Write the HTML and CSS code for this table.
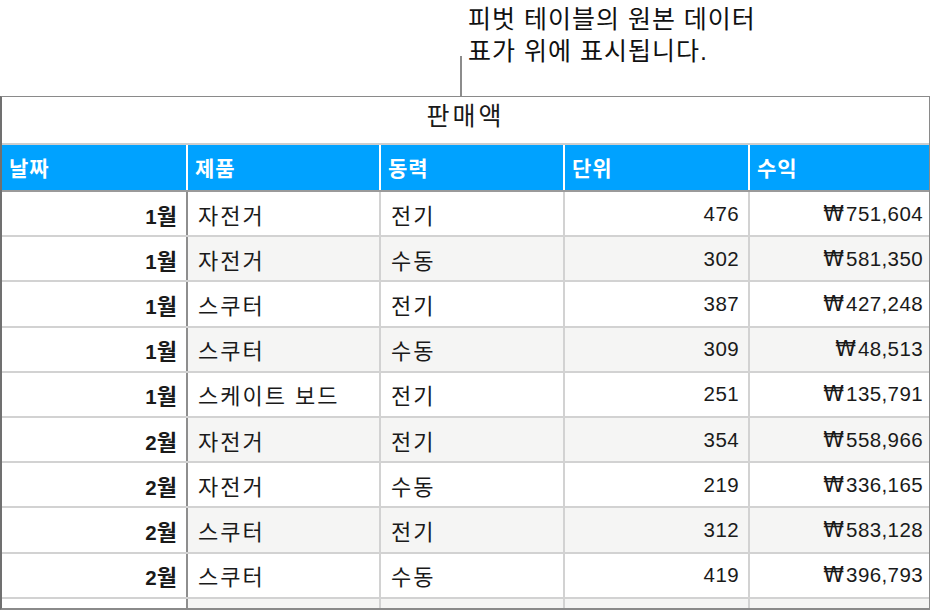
FILE: index.html
```html
<!DOCTYPE html>
<html lang="ko">
<head>
<meta charset="utf-8">
<link rel="stylesheet" href="styles.css">
</head>
<body>
<div class="callout">
  <div class="leader"></div>
  <div class="callout-text">피벗 테이블의 원본 데이터<br>표가 위에 표시됩니다.</div>
</div>
<div class="sheet">
  <div class="title">판매액</div>
  <table class="grid">
    <colgroup>
      <col class="c1"><col class="c2"><col class="c3"><col class="c4"><col class="c5">
    </colgroup>
    <thead>
      <tr><th>날짜</th><th>제품</th><th>동력</th><th>단위</th><th>수익</th></tr>
    </thead>
    <tbody>
      <tr><td class="hd">1<span class="ko">월</span></td><td class="txt">자전거</td><td class="txt">전기</td><td class="num">476</td><td class="num"><span class="won">₩</span>751,604</td></tr>
      <tr class="alt"><td class="hd">1<span class="ko">월</span></td><td class="txt">자전거</td><td class="txt">수동</td><td class="num">302</td><td class="num"><span class="won">₩</span>581,350</td></tr>
      <tr><td class="hd">1<span class="ko">월</span></td><td class="txt">스쿠터</td><td class="txt">전기</td><td class="num">387</td><td class="num"><span class="won">₩</span>427,248</td></tr>
      <tr class="alt"><td class="hd">1<span class="ko">월</span></td><td class="txt">스쿠터</td><td class="txt">수동</td><td class="num">309</td><td class="num"><span class="won">₩</span>48,513</td></tr>
      <tr><td class="hd">1<span class="ko">월</span></td><td class="txt">스케이트 보드</td><td class="txt">전기</td><td class="num">251</td><td class="num"><span class="won">₩</span>135,791</td></tr>
      <tr class="alt"><td class="hd">2<span class="ko">월</span></td><td class="txt">자전거</td><td class="txt">전기</td><td class="num">354</td><td class="num"><span class="won">₩</span>558,966</td></tr>
      <tr><td class="hd">2<span class="ko">월</span></td><td class="txt">자전거</td><td class="txt">수동</td><td class="num">219</td><td class="num"><span class="won">₩</span>336,165</td></tr>
      <tr class="alt"><td class="hd">2<span class="ko">월</span></td><td class="txt">스쿠터</td><td class="txt">전기</td><td class="num">312</td><td class="num"><span class="won">₩</span>583,128</td></tr>
      <tr><td class="hd">2<span class="ko">월</span></td><td class="txt">스쿠터</td><td class="txt">수동</td><td class="num">419</td><td class="num"><span class="won">₩</span>396,793</td></tr>
      <tr class="alt"><td class="hd"></td><td></td><td></td><td></td><td></td></tr>
    </tbody>
  </table>
</div>
</body>
</html>
```

FILE: styles.css
```css
html, body {
  margin: 0;
  padding: 0;
  background: #ffffff;
}
body {
  width: 931px;
  height: 612px;
  overflow: hidden;
  font-family: "Liberation Sans", "Noto Sans CJK KR", sans-serif;
  color: #1a1a1a;
}
.callout {
  display: flex;
  height: 96px;
  gap: 6px;
  padding-left: 460px;
  box-sizing: border-box;
}
.leader {
  width: 2px;
  height: 40px;
  margin-top: 56px;
  background: #8c8c8c;
}
.callout-text {
  font-size: 25px;
  line-height: 32px;
  letter-spacing: 1px;
  padding-top: 3px;
  color: #111;
  white-space: nowrap;
}
.sheet {
  width: 930px;
  height: 514px;
  box-sizing: border-box;
  border: 1px solid #8a8a8a;
  border-left: 2px solid #707070;
  border-bottom: 2px solid #8a8a8a;
  overflow: hidden;
}
.title {
  height: 48px;
  line-height: 38px;
  text-align: center;
  font-size: 25px;
  letter-spacing: 3px;
  color: #1a1a1a;
  border-bottom: 2px solid #cdcdcd;
  box-sizing: border-box;
}
.grid {
  border-collapse: collapse;
  table-layout: fixed;
  width: 928px;
}
.c1 { width: 185px; }
.c2 { width: 193px; }
.c3 { width: 184px; }
.c4 { width: 185px; }
.c5 { width: 181px; }
.grid th {
  background: #00a2ff;
  color: #ffffff;
  font-weight: bold;
  font-size: 21px;
  letter-spacing: 1px;
  text-align: left;
  height: 46px;
  padding: 0 0 2px 7px;
  border-left: 2px solid #ffffff;
  border-bottom: 2px solid #9a9a9a;
  box-sizing: border-box;
}
.grid th:first-child { border-left: none; }
.grid td {
  height: 45.2px;
  padding: 0 9px 0 10px;
  font-size: 20.5px;
  border-left: 2px solid #d2d2d2;
  border-bottom: 2px solid #d2d2d2;
  box-sizing: border-box;
  white-space: nowrap;
}
.grid td.txt {
  font-size: 22px;
  letter-spacing: 2px;
}
.grid td.hd {
  border-left: none;
  text-align: right;
  font-weight: bold;
  background: #ffffff;
}
.ko { font-size: 22px; }
.won {
  font-family: "DejaVu Sans", sans-serif;
  font-size: 21px;
  letter-spacing: 2px;
}
.grid td:nth-child(2) {
  border-left: 2px solid #8e8e8e;
}
.grid td.num { text-align: right; padding-right: 9px; letter-spacing: 0.4px; }
.grid td:last-child { padding-right: 7px; }
.grid tr.alt td { background: #f5f5f4; }
.grid tr.alt td.hd { background: #ffffff; }
```
